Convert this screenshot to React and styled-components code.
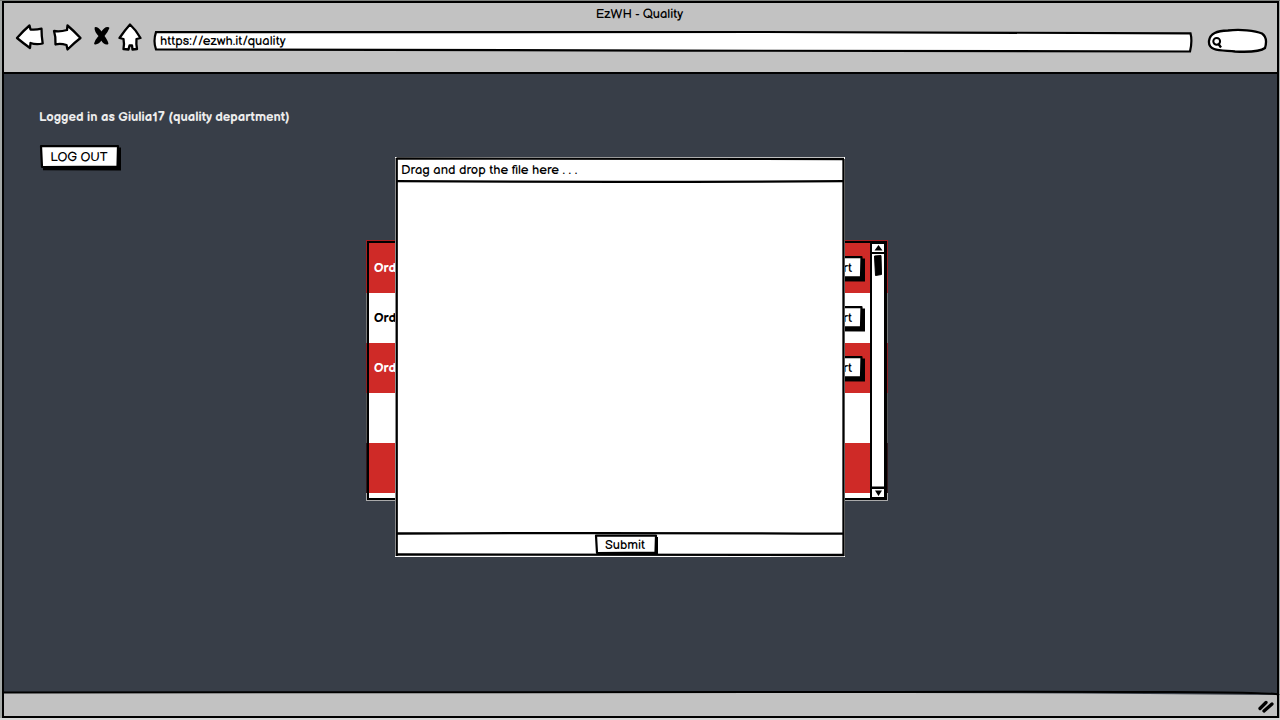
import React from "react";
import styled, { createGlobalStyle } from "styled-components";

const GlobalStyle = createGlobalStyle`
  * { box-sizing: border-box; }
  body { margin: 0; background: #fff; overflow: hidden; }
`;

const Browser = styled.div`
  width: 1280px;
  height: 720px;
  padding: 1px 1px 2px 2px;
  display: flex;
  flex-direction: column;
  background: linear-gradient(#7f827f 0 1px, #a6aaa8 1px 718px, #d8d8d8 718px);
  color: #000;
  font-family: "Balsamiq Sans", Lato, sans-serif;
  font-size: 13px;
`;
const Chrome = styled.header`
  height: 73px;
  flex: none;
  background: #c2c2c2;
  border: solid #000;
  border-width: 2px 2px 2.5px 2px;
`;
const Text = styled.span`
  display: block;
  white-space: nowrap;
  line-height: 16px;
  font-size: 13px;
  font-weight: ${(p) => p.$weight || 400};
  color: ${(p) => p.$color || "#000"};
`;
const TitleBar = styled.div`
  height: 19px;
  padding: 3px 2px 0 0;
  display: flex;
  justify-content: center;
`;
const Toolbar = styled.div`
  display: flex;
  align-items: flex-start;
  padding-left: 11px;
`;
const NavIcons = styled.svg`
  width: 130px;
  height: 30px;
  flex: none;
`;
const AddressBar = styled.div`
  position: relative;
  width: 1040px;
  height: 22px;
  margin: 8px 0 0 8px;
  padding: 3px 7px;
  flex: none;
`;
const SearchBox = styled.svg`
  width: 62px;
  height: 26px;
  margin: 6px 0 0 13px;
  flex: none;
`;
const Sketch = styled.svg`
  position: absolute;
  inset: 0;
  width: 100%;
  height: 100%;
  overflow: visible;
  pointer-events: none;
`;
const Above = styled.div`
  position: relative;
`;
const Page = styled.main`
  position: relative;
  flex: 1;
  background: #383e48;
  border: solid #000;
  border-width: 0 2px;
  padding: 35px 0 0 35px;
`;
const Account = styled.section`
  height: 131px;
  display: flex;
  flex-direction: column;
  align-items: flex-start;
  gap: 19px;
  button { margin-left: 1px; }
`;
const Button = styled.button`
  position: relative;
  width: ${(p) => p.$w}px;
  height: ${(p) => p.$h}px;
  flex: none;
  padding: 0 ${(p) => p.$pad || 0}px 0 0;
  border: 0;
  background: none;
  font-family: inherit;
  display: flex;
  align-items: center;
  justify-content: ${(p) => p.$justify || "center"};
`;
const Orders = styled.section`
  width: 522px;
  height: 261px;
  margin-left: 327px;
  padding: 1px;
  display: flex;
  background: linear-gradient(#a51e20 0 53px, #777 53px 103px, #8d2023 103px 153px, #555 153px 203px, #30171b 203px 253px, #aaa 253px);
`;
const OrderList = styled.div`
  flex: 1;
  background: #fff;
  border: solid #000;
  border-width: 2px 0 2px 2px;
`;
const OrderRow = styled.div`
  height: 50px;
  display: flex;
  align-items: center;
  justify-content: space-between;
  padding: 0 5px;
  background: ${(p) => (p.$red ? "#cf2a27" : "#fff")};
`;
const ScrollBar = styled.svg`
  width: 17px;
  height: 259px;
  flex: none;
`;
const Dialog = styled.section`
  position: absolute;
  left: 391px;
  top: 83px;
  width: 450px;
  height: 400px;
  display: flex;
  flex-direction: column;
  background: #fff;
`;
const DialogHeader = styled.div`
  height: 25px;
  padding: 5px 6px;
`;
const DropZone = styled.div`
  flex: 1;
`;
const DialogFooter = styled.div`
  height: 23px;
  display: flex;
  justify-content: center;
  padding-left: 13px;
`;
const StatusBar = styled.footer`
  position: relative;
  height: 26px;
  flex: none;
  background: #c2c2c2;
  border: solid #000;
  border-width: 0 2px 2px;
  display: flex;
  justify-content: flex-end;
  align-items: center;
`;
const Grip = styled.svg`
  width: 20px;
  height: 18px;
  margin: 5px 1px 0 0;
`;

function BoxedButton({ w, h, shadow, drop = 0, pad, justify, children }) {
  const r = w - shadow;
  const b = h - shadow - 0.5;
  return (
    <Button $w={w} $h={h} $pad={pad} $justify={justify}>
      <Sketch>
        <path d={`M3 4L${w} ${3 + drop}V${h + drop}L3 ${h + drop - 0.2}Z`} fill="#000" />
        <path
          d={`M1 ${1.6 + drop}L${r} ${1.5 + drop}L${r - 0.5} ${b}L2 ${b + 0.5}Z`}
          fill="#fff"
          stroke="#000"
          strokeWidth="2.2"
          strokeLinejoin="round"
        />
      </Sketch>
      <Above>{children}</Above>
    </Button>
  );
}

const rows = [
  { red: true, label: true },
  { red: false, label: true },
  { red: true, label: true },
  { red: false },
  { red: true },
];

export default function App() {
  return (
    <Browser>
      <GlobalStyle />
      <Chrome>
        <TitleBar>
          <Text>EzWH - Quality</Text>
        </TitleBar>
        <Toolbar>
          <NavIcons viewBox="15 22 130 30" fill="#fff" stroke="#000" strokeWidth="2.3" strokeLinejoin="round" strokeLinecap="round">
            <path d="M17 38Q23 31 29.5 25.5L30.500 29.500Q36 30 41.500 28.700Q41.500 36 42.700 43.500Q36 45 30.500 43L30 48Q23 43 17 38Z" />
            <path d="M54 31Q60 32 67 30L67.500 25.500Q74 31 80.500 38Q74 43 67.500 49.500L66.500 45Q60 43 55.500 44.500Q56 37 54 31Z" />
            <path d="M95.500 28Q98 28 101.500 33Q105 27 108.500 28Q107 32 103.500 36Q107 41 107.500 43.500Q104 44 101.500 39Q98 44 95 43.500Q96 40 99.500 36Q95 31 95.500 28Z" fill="#000" strokeWidth="1.800" />
            <path d="M130 24.500Q136 30 140.500 38L136.500 39Q136 44 137 49L132.500 49.500L132 45.500L129.500 45.500L128.500 49.500L123.500 49Q124.500 44 123.500 39L119.500 38Q125 30 130 24.500Z" />
          </NavIcons>
          <AddressBar>
            <Sketch viewBox="0 0 1040 22">
              <path d="M3 2.200Q300 1.500 610 2T1037.500 3.300Q1039.500 11 1037 21.500Q760 20.500 520 20.600T3 19.400Q0 11 3 2.200Z" fill="#fff" stroke="#000" strokeWidth="2.200" />
            </Sketch>
            <Above><Text>https://ezwh.it/quality</Text></Above>
          </AddressBar>
          <SearchBox viewBox="1206 28 62 26">
            <path d="M1209 41C1210 33 1217 31 1228 30.500C1240 29 1255 30.500 1262 33.500C1267 37 1266.500 43 1265 48C1260 52 1245 52 1235 51.500C1223 50 1208 52 1209 41Z" fill="#fff" stroke="#000" strokeWidth="2.300" />
            <circle cx="1216.700" cy="41.300" r="3.400" fill="none" stroke="#000" strokeWidth="2" />
            <path d="M1218.500 44L1221 47.500" stroke="#000" strokeWidth="2.300" />
          </SearchBox>
        </Toolbar>
      </Chrome>

      <Page>
        <Account>
          <Text $weight={700} $color="#ececec">Logged in as Giulia17 (quality department)</Text>
          <BoxedButton w={81} h={26} shadow={3} drop={0.5} pad={3}>
            <Text>LOG OUT</Text>
          </BoxedButton>
        </Account>

        <Orders>
          <OrderList>
            {rows.map((row, i) => (
              <OrderRow key={i} $red={row.red}>
                {row.label && (
                  <>
                    <Text $weight={700} $color={row.red ? "#fff" : "#000"}>Ord</Text>
                    <BoxedButton w={70} h={26} shadow={3.5} drop={0.5} pad={13} justify="flex-end">
                      <Text>rt</Text>
                    </BoxedButton>
                  </>
                )}
              </OrderRow>
            ))}
          </OrderList>
          <ScrollBar viewBox="870 241 17 259">
            <path d="M870 241H887V500H870Z" fill="#000" />
            <path d="M872 244H884V252H872ZM872 254H884V486.500H872ZM872 489H884V497H872Z" fill="#fff" />
            <path d="M874.500 250.500L878.500 245L882.500 250.500ZM875 490.500H882L878.500 496Z" fill="#000" />
            <path d="M874.500 256L881 255.500L881.500 274.500L875.500 275.500Z" fill="#000" stroke="#000" strokeLinejoin="round" />
          </ScrollBar>
        </Orders>

        <Dialog>
          <DialogHeader>
            <Text>Drag and drop the file here . . .</Text>
          </DialogHeader>
          <DropZone />
          <DialogFooter>
            <BoxedButton w={63} h={21} shadow={2} pad={3}>
              <Text>Submit</Text>
            </BoxedButton>
          </DialogFooter>
          <Sketch viewBox="0 0 450 400" fill="none" stroke="#000" strokeWidth="2.300">
            <path d="M1.500 1.500Q230 2.500 449 2M1.500 24.200Q220 25.500 449 24.200M1.500 376.500Q220 375.500 449 376.700M1.500 397.500Q220 398.500 449 398" />
            <path d="M1.700 1V399M448.500 2V399" />
          </Sketch>
        </Dialog>
      </Page>

      <StatusBar>
        <Sketch viewBox="0 0 1273 24">
          <path d="M0 0H1273V3Q1100 1 900 1T0 1Z" fill="#383e48" />
          <path d="M0 0.500Q300 1.500 800 0T1273 3" fill="none" stroke="#000" strokeWidth="2" />
        </Sketch>
        <Grip viewBox="1256 699 20 18" stroke="#000" strokeWidth="3.300" strokeLinecap="round">
          <path d="M1260 709.500L1266 703.500M1264 712L1272 705" />
        </Grip>
      </StatusBar>
    </Browser>
  );
}
